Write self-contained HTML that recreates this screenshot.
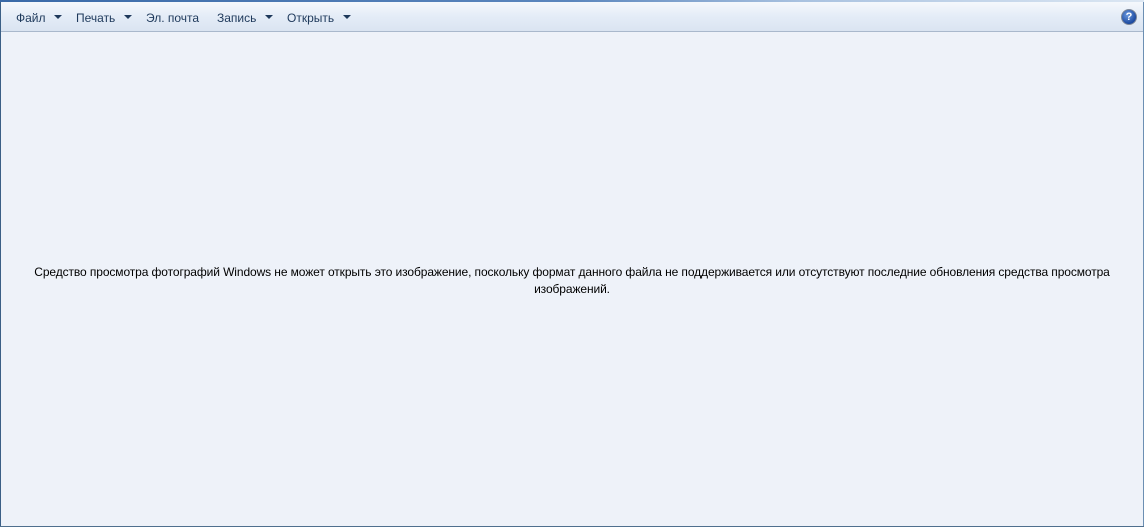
<!DOCTYPE html>
<html><head><meta charset="utf-8"><style>
html,body{margin:0;padding:0}
body{width:1144px;height:527px;position:relative;overflow:hidden;background:#eef2f9;font-family:"Liberation Sans",sans-serif}
.top{position:absolute;left:0;top:0;width:1144px;height:2px;background:linear-gradient(90deg,#3a6aa8,#5b86bd 50%,#a9c2e0 70%,#dce7f3)}
.bar{position:absolute;left:0;top:2px;width:1144px;height:29px;background:linear-gradient(#f5f8fc,#e4ecf7 50%,#dae4f1);border-bottom:1px solid #a9b8cc}
.bar span{position:absolute;top:9px;font-size:12px;color:#1e395b}
.arr{position:absolute;top:13px;width:0;height:0;border-left:4px solid transparent;border-right:4px solid transparent;border-top:4px solid #1e395b}
.help{position:absolute;left:1121px;top:7px;width:16px;height:16px;border-radius:50%;background:radial-gradient(circle at 40% 35%,#6d9be0,#1c4aa0 70%);border:1px solid #7d8798;box-sizing:border-box;color:#fff;font-weight:bold;font-size:11px;text-align:center;line-height:14px}
.lb{position:absolute;left:0;top:2px;width:1px;height:525px;background:#3b5f86}
.rb{position:absolute;right:0;top:2px;width:1px;height:525px;background:#6c8fb3}
.bb{position:absolute;left:0;bottom:0;width:1144px;height:1px;background:#4f6f8e}
.msg{position:absolute;left:0;top:264px;width:1144px;text-align:center;font-size:12px;line-height:17px;color:#000;letter-spacing:-0.1px}
</style></head><body>
<div class="top"></div>
<div class="bar">
<span style="left:16px">Файл</span><div class="arr" style="left:54px"></div>
<span style="left:76px">Печать</span><div class="arr" style="left:124px"></div>
<span style="left:146px">Эл. почта</span>
<span style="left:217px">Запись</span><div class="arr" style="left:265px"></div>
<span style="left:287px">Открыть</span><div class="arr" style="left:343px"></div>
<div class="help">?</div>
</div>
<div class="lb"></div><div class="rb"></div><div class="bb"></div>
<div class="msg">Средство просмотра фотографий Windows не может открыть это изображение, поскольку формат данного файла не поддерживается или отсутствуют последние обновления средства просмотра<br>изображений.</div>
</body></html>
